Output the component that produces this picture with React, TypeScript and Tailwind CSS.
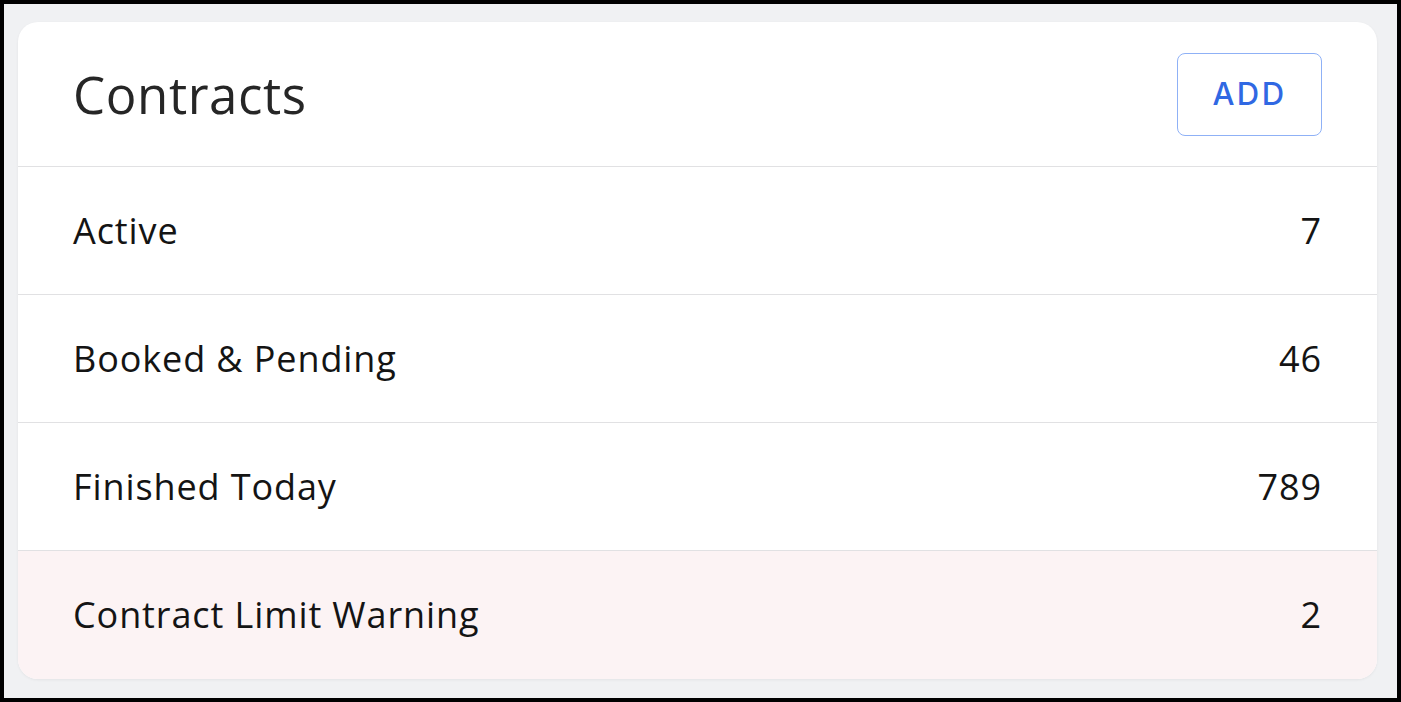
export default function App() {
  const rows = [
    { label: "Active", value: "7", warn: false },
    { label: "Booked & Pending", value: "46", warn: false },
    { label: "Finished Today", value: "789", warn: false },
    { label: "Contract Limit Warning", value: "2", warn: true },
  ];

  return (
    <div className="w-[1401px] h-[702px] border-4 border-black bg-[#f0f1f3] pl-[14px] pr-[20px] pt-[18px] pb-[20px] font-['Open_Sans',sans-serif]">
      <div className="bg-white rounded-[20px] overflow-hidden shadow-[0_1px_3px_rgba(0,0,0,0.06)]">
        <div className="h-[145px] flex items-center justify-between pl-[55px] pr-[55px] border-b border-[#e1e1e3]">
          <h1 className="text-[51px] text-[#262626] tracking-[0.6px]">Contracts</h1>
          <button className="w-[145px] h-[83px] rounded-[8px] border border-[#8fb1f6] text-[#3068e3] text-[31px] font-medium tracking-[2.5px] font-['Inter',sans-serif]">
            ADD
          </button>
        </div>
        {rows.map((r, i) => (
          <div
            key={r.label}
            className={`h-[128px] flex items-center justify-between pl-[55px] pr-[55px] text-[36px] text-[#141414] tracking-[0.9px] ${i < rows.length - 1 ? "border-b border-[#e1e1e3]" : ""} ${r.warn ? "bg-[#fcf3f4]" : ""}`}
          >
            <span>{r.label}</span>
            <span>{r.value}</span>
          </div>
        ))}
      </div>
    </div>
  );
}
